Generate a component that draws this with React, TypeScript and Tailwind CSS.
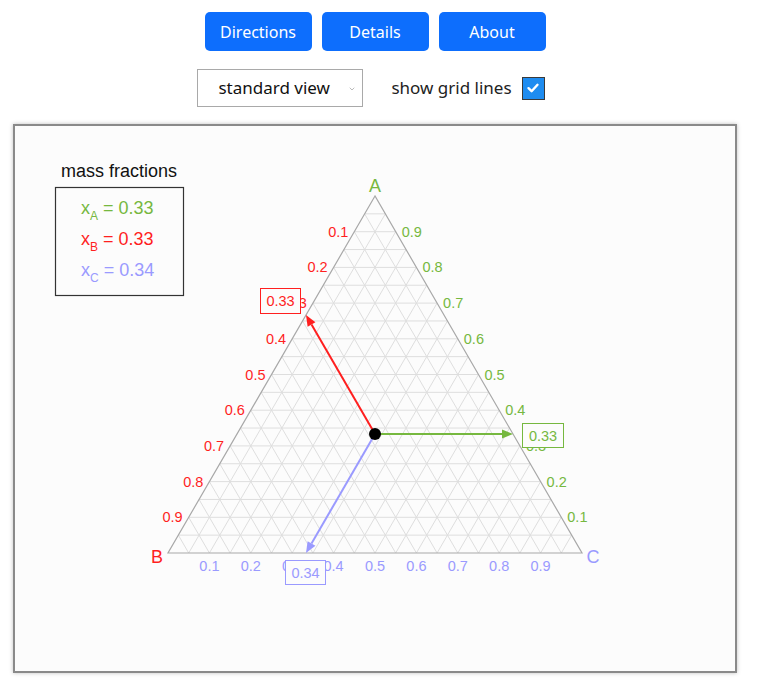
import { ChevronDown } from 'lucide-react';

type Pt = { x: number; y: number };

const A: Pt = { x: 375, y: 196 };
const B: Pt = { x: 168, y: 553 };
const C: Pt = { x: 582, y: 553 };

const GREEN = '#76b83f';
const RED = '#ff1f1f';
const BLUE = '#9a9aff';

const mix = (p: Pt, q: Pt, t: number): Pt => ({ x: p.x * t + q.x * (1 - t), y: p.y * t + q.y * (1 - t) });

function Arrow({ from, to, color }: { from: Pt; to: Pt; color: string }) {
  const dx = to.x - from.x;
  const dy = to.y - from.y;
  const len = Math.hypot(dx, dy);
  const ux = dx / len;
  const uy = dy / len;
  const head = 11;
  const half = 4.5;
  const base = { x: to.x - ux * head, y: to.y - uy * head };
  const pts = [
    `${to.x},${to.y}`,
    `${base.x - uy * half},${base.y + ux * half}`,
    `${base.x + uy * half},${base.y - ux * half}`,
  ].join(' ');
  return (
    <g>
      <line x1={from.x} y1={from.y} x2={base.x} y2={base.y} stroke={color} strokeWidth={2} />
      <polygon points={pts} fill={color} />
    </g>
  );
}

function ValueBox({ x, y, w, h, color, value }: { x: number; y: number; w: number; h: number; color: string; value: string }) {
  return (
    <g>
      <rect x={x + 0.5} y={y + 0.5} width={w} height={h} fill="#fcfcfc" stroke={color} strokeWidth={1} />
      <text x={x + w / 2 + 0.5} y={y + h / 2 + 5.5} textAnchor="middle" fill={color} fontSize={14.5}>
        {value}
      </text>
    </g>
  );
}

function TernaryChart() {
  const steps = Array.from({ length: 19 }, (_, i) => (i + 1) / 20);
  const ticks = Array.from({ length: 9 }, (_, i) => (i + 1) / 10);
  const dot: Pt = { x: (A.x + B.x + C.x) / 3, y: (A.y + B.y + C.y) / 3 };
  const third = 1 / 3;

  return (
    <svg width={720} height={545} className="block" style={{ fontFamily: '"Liberation Sans", Arial, sans-serif' }}>
      <g transform="translate(-15,-126)">
        {/* legend */}
        <text x={61} y={177} fontSize={18} fill="#111">mass fractions</text>
        <rect x={55.5} y={187.5} width={128} height={108} fill="none" stroke="#333" strokeWidth={1.2} />
        <text x={81} y={214} fontSize={18} fill={GREEN}>
          x<tspan fontSize={12} dy={6}>A</tspan>
          <tspan dy={-6}> = 0.33</tspan>
        </text>
        <text x={81} y={245} fontSize={18} fill={RED}>
          x<tspan fontSize={12} dy={6}>B</tspan>
          <tspan dy={-6}> = 0.33</tspan>
        </text>
        <text x={81} y={276} fontSize={18} fill={BLUE}>
          x<tspan fontSize={12} dy={6}>C</tspan>
          <tspan dy={-6}> = 0.34</tspan>
        </text>

        {/* grid */}
        <g stroke="#dedede" strokeWidth={1}>
          {steps.map((t) => {
            const a1 = mix(A, B, t), a2 = mix(A, C, t);
            const b1 = mix(B, A, t), b2 = mix(B, C, t);
            const c1 = mix(C, A, t), c2 = mix(C, B, t);
            return (
              <g key={t}>
                <line x1={a1.x} y1={a1.y} x2={a2.x} y2={a2.y} />
                <line x1={b1.x} y1={b1.y} x2={b2.x} y2={b2.y} />
                <line x1={c1.x} y1={c1.y} x2={c2.x} y2={c2.y} />
              </g>
            );
          })}
        </g>
        <polygon points={`${A.x},${A.y} ${B.x},${B.y} ${C.x},${C.y}`} fill="none" stroke="#a8a8a8" strokeWidth={1.2} />

        {/* tick labels */}
        {ticks.map((v) => {
          const pb = mix(B, A, v);
          const pa = mix(A, C, v);
          const pc = mix(C, B, v);
          return (
            <g key={v} fontSize={14.5}>
              <text x={pb.x - 6} y={pb.y + 5} textAnchor="end" fill={RED}>{v.toFixed(1)}</text>
              <text x={pa.x + 6} y={pa.y + 5} textAnchor="start" fill={GREEN}>{v.toFixed(1)}</text>
              <text x={pc.x} y={pc.y + 18} textAnchor="middle" fill={BLUE}>{v.toFixed(1)}</text>
            </g>
          );
        })}

        {/* vertex labels */}
        <text x={375} y={192} textAnchor="middle" fontSize={18} fill={GREEN}>A</text>
        <text x={157} y={563} textAnchor="middle" fontSize={18} fill={RED}>B</text>
        <text x={593} y={563} textAnchor="middle" fontSize={18} fill={BLUE}>C</text>

        {/* arrows */}
        <Arrow from={dot} to={mix(A, C, third)} color={GREEN} />
        <Arrow from={dot} to={mix(B, A, third)} color={RED} />
        <Arrow from={dot} to={mix(C, B, third)} color={BLUE} />
        <circle cx={dot.x} cy={dot.y} r={6} fill="#000" />

        <ValueBox x={522} y={423} w={41} h={24} color={GREEN} value="0.33" />
        <ValueBox x={260} y={288} w={40} h={25} color={RED} value="0.33" />
        <ValueBox x={285} y={560} w={40} h={24} color={BLUE} value="0.34" />
      </g>
    </svg>
  );
}

export default function App() {
  return (
    <div className="w-[750px] bg-white pt-3 pb-6 flex flex-col items-center" style={{ fontFamily: '"Noto Sans", "Open Sans", sans-serif' }}>
      {/* top buttons */}
      <div className="flex gap-[10px]">
        {['Directions', 'Details', 'About'].map((label) => (
          <button
            key={label}
            className="w-[107px] h-[39px] rounded-[5px] bg-[#0d6efd] text-white text-[16px]"
          >
            {label}
          </button>
        ))}
      </div>

      {/* view controls */}
      <div className="mt-[18px] pr-[8px] flex items-center">
        <div className="relative w-[166px] h-[38px] border border-[#a9a9a9] bg-white flex items-center pl-[20px] text-[17px] text-[#111]">
          standard view
          <ChevronDown className="absolute right-[6px] top-[15px] w-[8px] h-[8px] text-[#999]" strokeWidth={2} />
        </div>
        <span className="ml-[28px] text-[17px] text-[#222]">show grid lines</span>
        <span className="ml-[10px] w-[23px] h-[23px] border border-[#3a3a3a] bg-[#1e8cf0] flex items-center justify-center">
          <svg width="14" height="14" viewBox="0 0 14 14">
            <path d="M2.5 7.2 L5.6 10.2 L11.5 3.8" fill="none" stroke="#fff" strokeWidth="2.4" strokeLinecap="round" strokeLinejoin="round" />
          </svg>
        </span>
      </div>

      {/* chart canvas */}
      <div className="mt-[17px] w-[724px] h-[549px] border-2 border-[#8a8a8a] bg-[#fcfcfc] shadow-[0_0_4px_rgba(0,0,0,0.25)]">
        <TernaryChart />
      </div>
    </div>
  );
}
